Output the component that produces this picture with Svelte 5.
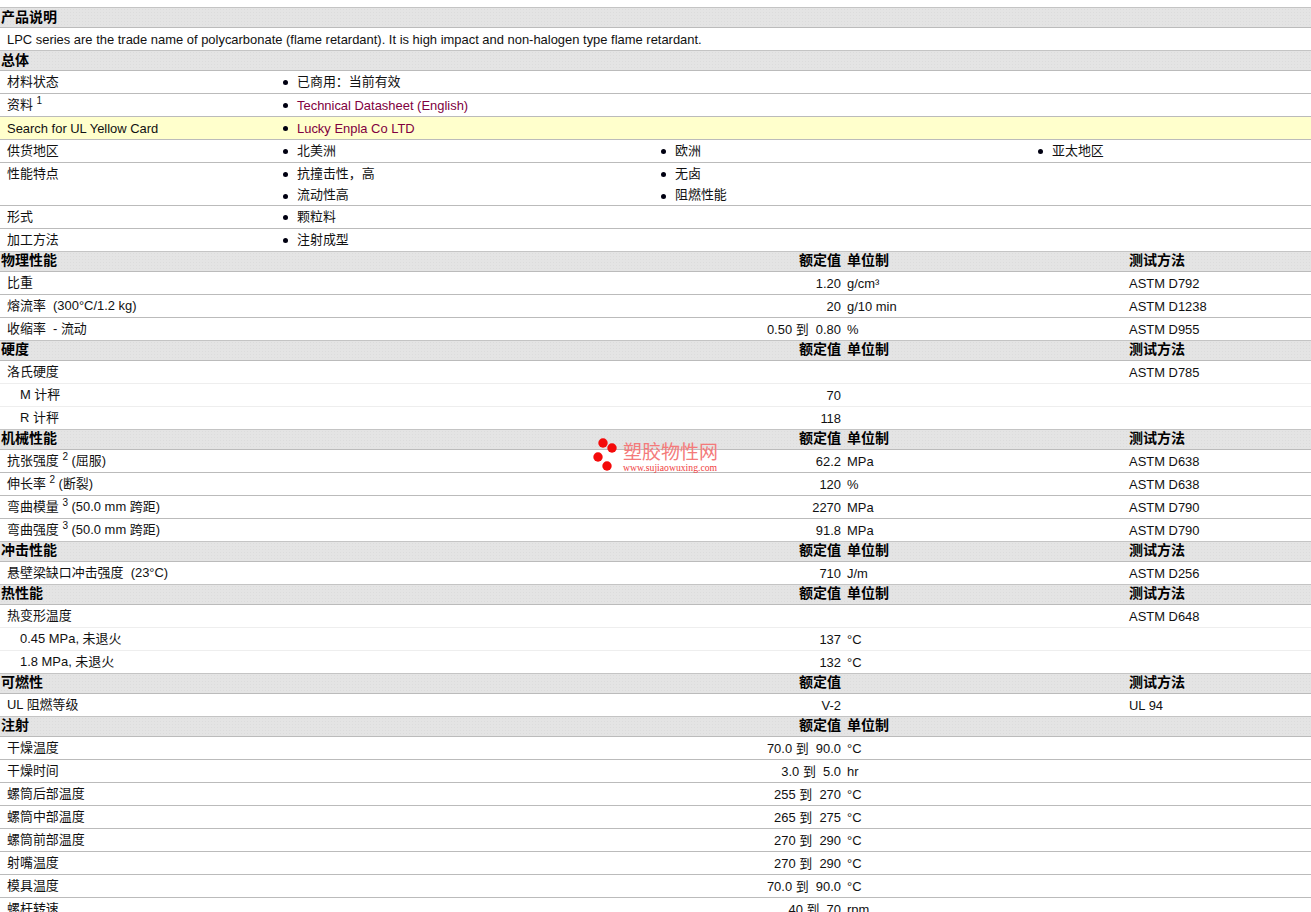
<script>
  const top = [
    { label: "材料状态", items: ["已商用：当前有效"] },
    { label: "资料", sup: "1", items: ["Technical Datasheet (English)"], link: true },
    { label: "Search for UL Yellow Card", items: ["Lucky Enpla Co LTD"], link: true, hl: true },
    { label: "供货地区", items: ["北美洲", "欧洲", "亚太地区"] },
    { label: "性能特点", items: ["抗撞击性，高", "无卤", "", "流动性高", "阻燃性能"] },
    { label: "形式", items: ["颗粒料"] },
    { label: "加工方法", items: ["注射成型"] }
  ];

  const sections = [
    { title: "物理性能", rows: [
      ["比重", "1.20", "g/cm³", "ASTM D792"],
      ["熔流率  (300°C/1.2 kg)", "20", "g/10 min", "ASTM D1238"],
      ["收缩率  - 流动", "0.50 到  0.80", "%", "ASTM D955"]
    ]},
    { title: "硬度", rows: [
      ["洛氏硬度", "", "", "ASTM D785"],
      ["M 计秤", "70", "", "", "", true],
      ["R 计秤", "118", "", "", "", true]
    ]},
    { title: "机械性能", rows: [
      ["抗张强度", "62.2", "MPa", "ASTM D638", ["2", " (屈服)"]],
      ["伸长率", "120", "%", "ASTM D638", ["2", " (断裂)"]],
      ["弯曲模量", "2270", "MPa", "ASTM D790", ["3", " (50.0 mm 跨距)"]],
      ["弯曲强度", "91.8", "MPa", "ASTM D790", ["3", " (50.0 mm 跨距)"]]
    ]},
    { title: "冲击性能", rows: [
      ["悬壁梁缺口冲击强度  (23°C)", "710", "J/m", "ASTM D256"]
    ]},
    { title: "热性能", rows: [
      ["热变形温度", "", "", "ASTM D648"],
      ["0.45 MPa, 未退火", "137", "°C", "", "", true],
      ["1.8 MPa, 未退火", "132", "°C", "", "", true]
    ]},
    { title: "可燃性", noUnit: true, rows: [
      ["UL 阻燃等级", "V-2", "", "UL 94"]
    ]},
    { title: "注射", noTest: true, rows: [
      ["干燥温度", "70.0 到  90.0", "°C", ""],
      ["干燥时间", "3.0 到  5.0", "hr", ""],
      ["螺筒后部温度", "255 到  270", "°C", ""],
      ["螺筒中部温度", "265 到  275", "°C", ""],
      ["螺筒前部温度", "270 到  290", "°C", ""],
      ["射嘴温度", "270 到  290", "°C", ""],
      ["模具温度", "70.0 到  90.0", "°C", ""],
      ["螺杆转速", "40 到  70", "rpm", ""]
    ]}
  ];
</script>

<div class="page">
  <div class="head title">产品说明</div>
  <div class="row desc">LPC series are the trade name of polycarbonate (flame retardant). It is high impact and non-halogen type flame retardant.</div>

  <div class="head title">总体</div>
  {#each top as r}
    <div class="row info" class:hl={r.hl}>
      <div class="label">{r.label}{#if r.sup}&nbsp;<sup>{r.sup}</sup>{/if}</div>
      <ul class:link={r.link}>
        {#each r.items as item}
          <li class:blank={!item}>{item}</li>
        {/each}
      </ul>
    </div>
  {/each}

  {#each sections as s}
    <div class="head cols">
      <div class="name">{s.title}</div>
      <div class="val">额定值</div>
      <div class="unit">{s.noUnit ? "" : "单位制"}</div>
      <div>{s.noTest ? "" : "测试方法"}</div>
    </div>
    {#each s.rows as r}
      <div class="row cols" class:sub={r[5]}>
        <div class="label">{r[0]}{#if r[4]}&nbsp;<sup>{r[4][0]}</sup>{r[4][1]}{/if}</div>
        <div class="val">{r[1]}</div>
        <div class="unit">{r[2]}</div>
        <div class="test">{r[3]}</div>
      </div>
    {/each}
  {/each}

  <div class="mark">
    <svg width="26" height="36" viewBox="0 0 26 36">
      <circle cx="12" cy="6" r="4.7" fill="#f40a0a" />
      <circle cx="21" cy="11" r="4.7" fill="#f40a0a" />
      <circle cx="7" cy="20" r="4.7" fill="#f40a0a" />
      <circle cx="16" cy="29" r="4.7" fill="#f40a0a" />
    </svg>
    <div class="mark-text">
      <div class="mark-cn">塑胶物性网</div>
      <div class="mark-en">www.sujiaowuxing.com</div>
    </div>
  </div>
</div>

<style>
  :global(body) {
    overflow: hidden;
    background: #fff;
  }

  .page {
    position: relative;
    padding-top: 7px;
    height: 905px;
    overflow: hidden;
    font-family: "Liberation Sans", "Noto Sans CJK SC", sans-serif;
    font-size: 12.95px;
    color: #111;
  }

  .head {
    box-sizing: border-box;
    height: 20px;
    border-top: 1px solid #c4c4c4;
    font-size: 14px;
    line-height: 17px;
    font-weight: bold;
    color: #000;
    background-color: #e4e4e4;
    background-image: radial-gradient(#dcdcdc 0.5px, transparent 0.6px);
    background-size: 3px 3px;
  }

  .title {
    padding-left: 1px;
    line-height: 19px;
  }

  .name {
    padding-left: 1px;
  }

  .row {
    box-sizing: border-box;
    min-height: 23px;
    padding-left: 7px;
    border-top: 1px solid #bbb;
    line-height: 22px;
    background: #fff;
  }

  .desc {
    line-height: 24px;
    height: 23px;
  }

  .label, .val, .unit {
    white-space: pre;
  }

  /* latin text sits a pixel lower than the CJK labels */
  .row .val, .row .unit, .test {
    height: 22px;
    line-height: 24px;
  }

  .info {
    display: grid;
    grid-template-columns: 276px 1fr;
  }

  .hl {
    background: #ffffcc;
  }

  .hl .label {
    height: 22px;
    line-height: 24px;
  }

  ul {
    display: grid;
    grid-template-columns: 378px 377px 1fr;
    margin: 0;
    padding: 0;
    list-style: none;
  }

  li {
    position: relative;
    padding-left: 14px;
    height: 22px;
  }

  li:nth-child(n+4) {
    height: 20px;
    line-height: 20px;
  }

  li:before {
    content: "";
    position: absolute;
    left: 0;
    top: 9px;
    width: 5px;
    height: 5px;
    border-radius: 50%;
    background: #001;
  }

  li.blank:before {
    display: none;
  }

  .link li {
    color: #800040;
    line-height: 24px;
  }

  .cols {
    display: grid;
    grid-template-columns: 600px 241px 288px 1fr;
  }

  .row.cols {
    padding-left: 0;
  }

  .row.cols .label {
    padding-left: 7px;
  }

  .val {
    text-align: right;
  }

  .unit {
    padding-left: 6px;
  }

  .sub {
    border-top-color: #eee;
  }

  .row.sub .label {
    padding-left: 20px;
  }

  sup {
    font-size: 10px;
    line-height: 0;
    vertical-align: 5px;
  }

  .mark {
    position: absolute;
    left: 591px;
    top: 437px;
    display: flex;
    gap: 6px;
  }

  .mark-text {
    padding-top: 5px;
  }

  .mark-cn {
    font-size: 19px;
    line-height: 21px;
    color: #f47a7a;
  }

  .mark-en {
    font-family: "Liberation Serif", serif;
    font-size: 9.7px;
    line-height: 9px;
    color: #f04040;
  }
</style>
